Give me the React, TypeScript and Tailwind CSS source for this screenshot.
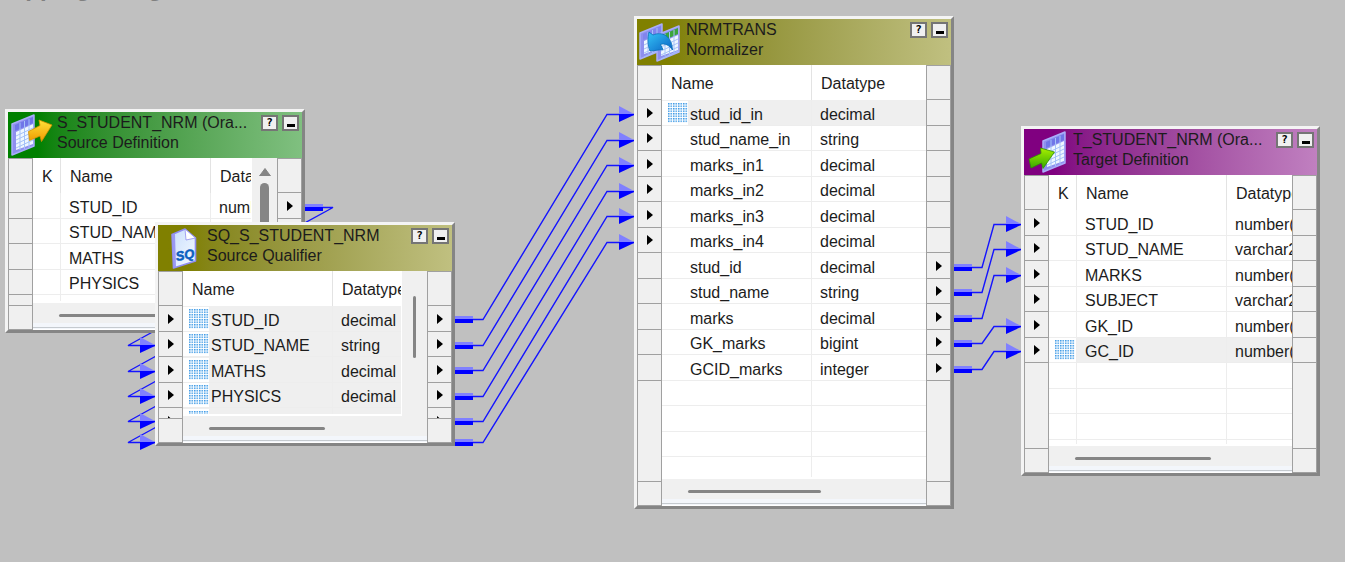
import type { ReactNode } from 'react';

type Field = {
  name: string;
  type: string;
  input?: boolean;
  output?: boolean;
  selected?: boolean;
};

type NodeProps = {
  title: string;
  kind: string;
  place: string;
  bodyHeight: string;
  headerColor: string;
  icon: ReactNode;
  fields: Field[];
  blankRows?: number;
  keyColumn?: boolean;
  hThumb: string;
  vScroll?: ReactNode;
};

function Dots() {
  return (
    <svg className="block h-5 w-5 shrink-0" viewBox="0 0 16 16" aria-hidden="true">
      <defs>
        <pattern id="dots" width="2" height="2" patternUnits="userSpaceOnUse">
          <rect width="1.2" height="1.2" fill="#3d9ae6" />
        </pattern>
      </defs>
      <rect width="16" height="16" fill="#ffffff" />
      <rect width="16" height="16" fill="url(#dots)" />
    </svg>
  );
}

function Ports({ fields, side }: { fields: Field[]; side: 'input' | 'output' }) {
  return (
    <div className="flex w-[25px] shrink-0 flex-col border-x border-[#a0a0a0] bg-[#f0f0f0]">
      <div className="h-[35px] shrink-0 border-y border-[#a0a0a0]" />
      <ul className="min-h-0 flex-1 overflow-hidden">
        {fields.map((f, i) => (
          <li
            key={i}
            className="flex items-center justify-center border-b border-[#a0a0a0] odd:h-[26px] even:h-[25px]"
          >
            {f[side] && (
              <svg className="h-[10px] w-[6px]" viewBox="0 0 6 10" aria-hidden="true">
                <path d="M0 0 L6 5 L0 10 Z" fill="#000" />
              </svg>
            )}
          </li>
        ))}
      </ul>
      <div className="h-[25px] shrink-0 border-y border-[#a0a0a0]" />
    </div>
  );
}

function FieldTable({ fields, blankRows = 0, keyColumn }: { fields: Field[]; blankRows?: number; keyColumn?: boolean }) {
  const line = 'border-b border-r border-[#ededed] p-0';
  return (
    <table className="w-full table-fixed border-separate border-spacing-0 text-left">
      <colgroup>
        {keyColumn && <col className="w-7" />}
        <col className="w-[150px]" />
        <col />
      </colgroup>
      <thead>
        <tr className="h-[35px]">
          {keyColumn && <th className="border-r border-[#e3e3e3] p-0 pt-0.5 pl-[9px] font-normal">K</th>}
          <th className="border-r border-[#e3e3e3] p-0 pt-0.5 pl-[9px] font-normal">Name</th>
          <th className="p-0 pt-0.5 pl-[9px] font-normal">Datatype</th>
        </tr>
      </thead>
      <tbody className="leading-5">
        {fields.map((f, i) => (
          <tr key={i} className="odd:h-[26px] even:h-[25px]">
            {keyColumn && (
              <td className={line}>
                {f.selected && (
                  <div className="pl-[6px]">
                    <Dots />
                  </div>
                )}
              </td>
            )}
            {keyColumn ? (
              <td className={f.selected ? `${line} bg-[#efefef] pt-1 pl-2` : `${line} pt-1 pl-2`}>{f.name}</td>
            ) : (
              <td className={f.selected ? `${line} bg-[#efefef]` : line}>
                <div className="flex">
                  <div className="flex h-6 w-[26px] shrink-0 items-center bg-white pl-[6px]">
                    {f.selected && <Dots />}
                  </div>
                  <div className="flex-1 pt-1 pl-[2px]">{f.name}</div>
                </div>
              </td>
            )}
            <td
              className={
                f.selected
                  ? 'border-b border-[#ededed] bg-[#efefef] p-0 pt-1 pl-2'
                  : 'border-b border-[#ededed] p-0 pt-1 pl-2'
              }
            >
              {f.type}
            </td>
          </tr>
        ))}
        {Array.from({ length: blankRows }, (_, i) => (
          <tr key={`blank-${i}`} className="odd:h-[26px] even:h-[25px]">
            {keyColumn && <td className={line} />}
            <td className={line} />
            <td className="border-b border-[#ededed] p-0" />
          </tr>
        ))}
      </tbody>
    </table>
  );
}

function MappingNode(p: NodeProps) {
  return (
    <section
      className={`absolute border-[3px] border-t-[#f4f4f4] border-r-[#858585] border-b-[#858585] border-l-[#f4f4f4] bg-[#f0f0f0] ${p.place}`}
    >
      <header className={`flex h-[46px] items-start bg-linear-to-r from-10% ${p.headerColor}`}>
        <div className="w-[49px] shrink-0 pl-px">{p.icon}</div>
        <div className="min-w-0 flex-1 overflow-hidden pt-px leading-5 whitespace-nowrap">
          <h2>{p.title}</h2>
          <p>{p.kind}</p>
        </div>
        <div className="flex shrink-0 gap-1 pt-[3px] pr-[3px]">
          <button
            type="button"
            aria-label="Help"
            className="flex h-4 w-[17px] items-center justify-center border-2 border-[#757575] bg-[#f0f0f0] font-['DejaVu_Sans_Mono',monospace] text-[11px] leading-3 font-bold text-black"
          >
            ?
          </button>
          <button
            type="button"
            aria-label="Minimize"
            className="flex h-4 w-[17px] items-end justify-center border-2 border-[#757575] bg-[#f0f0f0] pb-0.5"
          >
            <span className="h-[3px] w-2 bg-black" />
          </button>
        </div>
      </header>
      <div className={`flex ${p.bodyHeight}`}>
        <Ports fields={p.fields} side="input" />
        <div className="flex min-w-0 flex-1 flex-col">
          <div className="flex min-h-0 flex-1 overflow-hidden">
            <div
              className={
                p.vScroll
                  ? 'min-w-0 flex-1 overflow-hidden border-r border-b-2 border-white bg-white whitespace-nowrap'
                  : 'min-w-0 flex-1 overflow-hidden border-b-2 border-white bg-white whitespace-nowrap'
              }
            >
              <FieldTable fields={p.fields} blankRows={p.blankRows} keyColumn={p.keyColumn} />
            </div>
            {p.vScroll}
          </div>
          <div className="h-5 shrink-0 pt-[11px]">
            <div className={`h-[3px] rounded-full bg-[#858585] ${p.hThumb}`} />
          </div>
          <div className="h-[7px] shrink-0 border-b border-white bg-[#f3f6fb]">
            <div className="h-[5px] border-b border-[#c5cacf]" />
          </div>
        </div>
        <Ports fields={p.fields} side="output" />
      </div>
    </section>
  );
}

/* A slanted data sheet: rows and columns follow the lean of its outline. */
function Sheet({ x, y, h = 31, head = '#6f76e8' }: { x: number; y: number; h?: number; head?: string }) {
  const w = 22;
  const rise = 9;
  return (
    <g transform={`translate(${x} ${y})`}>
      <path
        d={`M0 ${rise} L${w} 0 V${h} L0 ${h + rise} Z`}
        fill="#8e90ee"
        stroke="#a9adfb"
        strokeWidth="1.5"
        strokeLinejoin="round"
      />
      <path d={`M3 ${rise + 1} L${w - 1} 2 V8 L3 ${rise + 7} Z`} fill={head} />
      <path d={`M4 ${rise + 8} L${w - 1} 9 V${h - 2} L4 ${h + rise - 5} Z`} fill="#eef7ff" />
      <path
        d={`M8 ${rise - 1} V${h + rise - 5} M12.500 ${rise - 3} V${h + rise - 6} M17 ${rise - 5} V${h + rise - 8} M4 ${rise + 12} L${w - 1} 13 M4 ${rise + 16} L${w - 1} 17 M4 ${rise + 20} L${w - 1} 21 M4 ${rise + 24} L${w - 1} 25`}
        stroke="#a5c2f8"
        strokeWidth="1"
        fill="none"
      />
    </g>
  );
}

const iconClass = 'block h-[46px] w-[45px]';

function SourceIcon() {
  return (
    <svg className={iconClass} viewBox="0 0 45 46" aria-hidden="true">
      <defs>
        <linearGradient id="gold" x1="0" y1="0" x2="0" y2="1">
          <stop offset="0" stopColor="#ffe23a" />
          <stop offset="1" stopColor="#f09a00" />
        </linearGradient>
      </defs>
      <Sheet x={3} y={3} />
      <path
        d="M19.5 19.5 L31 13.5 L30 8 L43 13 L32.5 29.5 L31 24 L20.5 28.5 Z"
        fill="url(#gold)"
        stroke="#d69000"
        strokeWidth="0.8"
        strokeLinejoin="round"
      />
    </svg>
  );
}

function TargetIcon() {
  return (
    <svg className={iconClass} viewBox="0 0 45 46" aria-hidden="true">
      <defs>
        <linearGradient id="lime" x1="0" y1="0" x2="0" y2="1">
          <stop offset="0" stopColor="#a8f000" />
          <stop offset="1" stopColor="#35a800" />
        </linearGradient>
      </defs>
      <Sheet x={18} y={3} />
      <path
        d="M4 30 L16 24.5 L15.500 19 L29.500 23 L18 39.500 L16.500 34 L6 39 Z"
        fill="url(#lime)"
        stroke="#2f8f00"
        strokeWidth="0.8"
        strokeLinejoin="round"
      />
    </svg>
  );
}

function NormalizerIcon() {
  return (
    <svg className={iconClass} viewBox="0 0 45 46" aria-hidden="true">
      <defs>
        <linearGradient id="azure" x1="0" y1="0" x2="1" y2="1">
          <stop offset="0" stopColor="#35c4f6" />
          <stop offset="1" stopColor="#0a62c4" />
        </linearGradient>
      </defs>
      <Sheet x={2} y={5} h={26} head="#8184ee" />
      <Sheet x={19} y={7} h={26} head="#3aa63a" />
      <path
        d="M11 13 L15 16 C24 12 34 17 34.500 31 C31 26 27 24 22.500 25.500 L25 30.500 L12 32 C9.500 26 9.500 19 11 13 Z"
        fill="url(#azure)"
        stroke="#0870b8"
        strokeWidth="0.8"
        strokeLinejoin="round"
      />
    </svg>
  );
}

function QualifierIcon() {
  return (
    <svg className={iconClass} viewBox="0 0 45 46" aria-hidden="true">
      <defs>
        <linearGradient id="paper" x1="0" y1="0" x2="1" y2="1">
          <stop offset="0" stopColor="#c9defc" />
          <stop offset="1" stopColor="#f6fbff" />
        </linearGradient>
      </defs>
      <path
        d="M13 9.500 L26 4 L36.500 13 V36 L14.500 43 Z"
        fill="url(#paper)"
        stroke="#8f8df0"
        strokeWidth="1.6"
        strokeLinejoin="round"
      />
      <path d="M13 9.500 L14.500 43 L17 42 L16 9 Z" fill="#9a98f2" />
      <path d="M26 4 L27 15 L36.500 13 Z" fill="#ffffff" stroke="#8f8df0" strokeWidth="0.8" />
      <text
        x="17.5"
        y="36"
        transform="rotate(-10 18 36)"
        fill="#0b5fc0"
        fontFamily="Liberation Sans, sans-serif"
        fontSize="13"
        fontWeight="bold"
        fontStyle="italic"
        stroke="#0b5fc0"
        strokeWidth="0.5"
      >
        SQ
      </text>
    </svg>
  );
}

type Link = { from: [number, number]; to: [number, number] };

const links: Link[] = [
  { from: [305, 207], to: [155, 319] },
  { from: [305, 232], to: [155, 345] },
  { from: [305, 258], to: [155, 371] },
  { from: [305, 283], to: [155, 396] },
  { from: [305, 308], to: [155, 421] },
  { from: [305, 330], to: [155, 442] },
  { from: [455, 319], to: [634, 114] },
  { from: [455, 345], to: [634, 140] },
  { from: [455, 370], to: [634, 165] },
  { from: [455, 396], to: [634, 191] },
  { from: [455, 421], to: [634, 216] },
  { from: [455, 442], to: [634, 242] },
  { from: [954, 267], to: [1021, 224] },
  { from: [954, 292], to: [1021, 249] },
  { from: [954, 318], to: [1021, 275] },
  { from: [954, 343], to: [1021, 326] },
  { from: [954, 369], to: [1021, 351] },
];

function Links() {
  return (
    <svg className="absolute top-0 left-0 h-[562px] w-[1345px]" viewBox="0 0 1345 562" aria-hidden="true">
      {links.map(({ from: [x1, y1], to: [x2, y2] }, i) => (
        <g key={i}>
          <path
            d={`M${x1 + 18} ${y1 + 0.5} H${x1 + 28} L${x2 - 27} ${y2 + 0.5} H${x2}`}
            fill="none"
            stroke="#1414ff"
            strokeWidth="1.4"
          />
          <rect x={x1} y={y1 - 3} width="18" height="3" fill="#8080ff" />
          <rect x={x1} y={y1} width="18" height="4" fill="#0000ff" />
          <path d={`M${x2 - 15} ${y2 - 8} L${x2} ${y2} H${x2 - 15} Z`} fill="#8080ff" />
          <path d={`M${x2 - 15} ${y2} H${x2} V${y2 + 1} L${x2 - 15} ${y2 + 8} Z`} fill="#0000ff" />
        </g>
      ))}
    </svg>
  );
}

const sourceFields: Field[] = [
  { name: 'STUD_ID', type: 'number(p,s)', output: true },
  { name: 'STUD_NAME', type: 'varchar2', output: true },
  { name: 'MATHS', type: 'number(p,s)', output: true },
  { name: 'PHYSICS', type: 'number(p,s)', output: true },
  { name: '', type: '', output: true },
];

const qualifierFields: Field[] = [
  { name: 'STUD_ID', type: 'decimal', input: true, output: true, selected: true },
  { name: 'STUD_NAME', type: 'string', input: true, output: true, selected: true },
  { name: 'MATHS', type: 'decimal', input: true, output: true, selected: true },
  { name: 'PHYSICS', type: 'decimal', input: true, output: true, selected: true },
  { name: '', type: '', input: true, output: true, selected: true },
];

const normalizerFields: Field[] = [
  { name: 'stud_id_in', type: 'decimal', input: true, selected: true },
  { name: 'stud_name_in', type: 'string', input: true },
  { name: 'marks_in1', type: 'decimal', input: true },
  { name: 'marks_in2', type: 'decimal', input: true },
  { name: 'marks_in3', type: 'decimal', input: true },
  { name: 'marks_in4', type: 'decimal', input: true },
  { name: 'stud_id', type: 'decimal', output: true },
  { name: 'stud_name', type: 'string', output: true },
  { name: 'marks', type: 'decimal', output: true },
  { name: 'GK_marks', type: 'bigint', output: true },
  { name: 'GCID_marks', type: 'integer', output: true },
];

const targetFields: Field[] = [
  { name: 'STUD_ID', type: 'number(p,s)', input: true },
  { name: 'STUD_NAME', type: 'varchar2', input: true },
  { name: 'MARKS', type: 'number(p,s)', input: true },
  { name: 'SUBJECT', type: 'varchar2', input: true },
  { name: 'GK_ID', type: 'number(p,s)', input: true },
  { name: 'GC_ID', type: 'number(p,s)', input: true, selected: true },
];

export default function App() {
  return (
    <main className="relative min-h-screen overflow-hidden bg-[#c0c0c0] font-['Liberation_Sans',Arial,sans-serif] text-base text-[#1c1c1c]">
      <h1 className="-mt-7 -ml-2 text-2xl leading-8 font-bold whitespace-nowrap text-[#808080]">Mapping Designer</h1>
      <Links />
      <MappingNode
        title="S_STUDENT_NRM (Ora..."
        kind="Source Definition"
        place="left-[5px] top-[109px] w-[300px]"
        bodyHeight="h-[172px]"
        headerColor="from-[#008000] to-[#80c080]"
        icon={<SourceIcon />}
        fields={sourceFields}
        keyColumn
        hThumb="ml-[26px] w-[120px]"
        vScroll={
          <div className="flex w-[25px] shrink-0 flex-col items-center gap-[7px] bg-[#f0f0f0] pt-[10px]">
            <svg className="h-2 w-3 shrink-0" viewBox="0 0 12 8" aria-hidden="true">
              <path d="M6 0.500 L11.500 8 H0.500 Z" fill="#858585" stroke="#858585" strokeLinejoin="round" />
            </svg>
            <div className="h-20 w-[9px] shrink-0 rounded-full bg-[#858585]" />
          </div>
        }
      />
      <MappingNode
        title="SQ_S_STUDENT_NRM"
        kind="Source Qualifier"
        place="left-[155px] top-[222px] w-[300px]"
        bodyHeight="h-[172px]"
        headerColor="from-[#808000] to-[#c0c080]"
        icon={<QualifierIcon />}
        fields={qualifierFields}
        hThumb="ml-[26px] w-[116px]"
        vScroll={
          <div className="flex w-[25px] shrink-0 justify-center bg-[#f0f0f0] pt-[25px]">
            <div className="h-[62px] w-[3px] rounded-full bg-[#858585]" />
          </div>
        }
      />
      <MappingNode
        title="NRMTRANS"
        kind="Normalizer"
        place="left-[634px] top-[16px] w-[320px]"
        bodyHeight="h-[441px]"
        headerColor="from-[#808000] to-[#c0c080]"
        icon={<NormalizerIcon />}
        fields={normalizerFields}
        blankRows={4}
        hThumb="ml-[26px] w-[133px]"
      />
      <MappingNode
        title="T_STUDENT_NRM (Ora..."
        kind="Target Definition"
        place="left-[1021px] top-[126px] w-[299px]"
        bodyHeight="h-[298px]"
        headerColor="from-[#800080] to-[#c080c0]"
        icon={<TargetIcon />}
        fields={targetFields}
        blankRows={4}
        keyColumn
        hThumb="ml-[26px] w-[136px]"
      />
    </main>
  );
}
